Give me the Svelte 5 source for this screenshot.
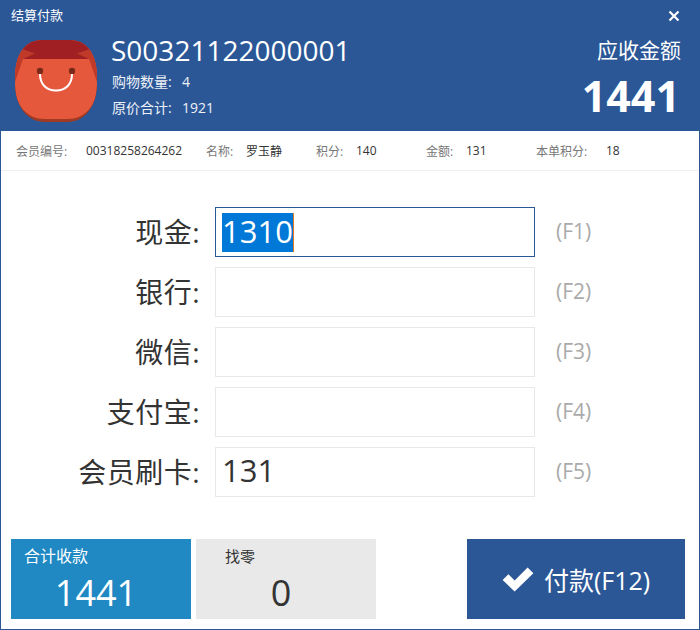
<script>
  const members = [
    { k: '会员编号:', v: '00318258264262', w: 190, kw: 70 },
    { k: '名称:', v: '罗玉静', w: 110, kw: 40 },
    { k: '积分:', v: '140', w: 110, kw: 40 },
    { k: '金额:', v: '131', w: 110, kw: 40 },
    { k: '本单积分:', v: '18', w: 100, kw: 70 }
  ];
  const rows = [
    { label: '现金:', value: '1310', key: '(F1)', active: true },
    { label: '银行:', value: '', key: '(F2)' },
    { label: '微信:', value: '', key: '(F3)' },
    { label: '支付宝:', value: '', key: '(F4)' },
    { label: '会员刷卡:', value: '131', key: '(F5)' }
  ];
</script>

<div class="win">
  <header class="head">
    <div class="title">结算付款</div>
    <svg class="close" viewBox="0 0 12 12" width="12" height="12"><path d="M1.5 1.5L10.5 10.5M10.5 1.5L1.5 10.5" stroke="#fff" stroke-width="2.2" fill="none"/></svg>
    <div class="summary">
      <svg class="bag" viewBox="0 0 82 82" width="82" height="82">
        <defs>
          <clipPath id="bagclip"><path d="M28 0H54C72 0 82 14 82 38V44C82 66 70 82 52 82H30C12 82 0 66 0 44V38C0 14 10 0 28 0Z"/></clipPath>
        </defs>
        <g clip-path="url(#bagclip)">
          <rect width="82" height="82" fill="#a03a22"/>
          <path d="M0 0H82V44C82 66 70 79 52 79H30C12 79 0 66 0 44Z" fill="#e6583b"/>
          <path d="M0 0H82V42L74 19H8L0 42Z" fill="#bf3a28"/>
          <path d="M8 19L20 13.500 4 8 4 0H78V8L62 13.500 74 19Z" fill="#a01f22"/>
        </g>
        <circle cx="25" cy="31" r="3.200" fill="#7a2a18"/>
        <circle cx="57" cy="31" r="3.200" fill="#7a2a18"/>
        <path d="M25 34C25 44 31 50.500 41 50.500C51 50.500 57 44 57 34" stroke="#fff" stroke-width="2" fill="none"/>
      </svg>
      <div class="order">
        <div class="no">S00321122000001</div>
        <div class="line"><span class="lk">购物数量:</span><span>4</span></div>
        <div class="line"><span class="lk">原价合计:</span><span>1921</span></div>
      </div>
      <div class="due">
        <div class="due-l">应收金额</div>
        <div class="due-v">1441</div>
      </div>
    </div>
  </header>

  <div class="members">
    {#each members as m}
      <div class="m" style="width:{m.w}px"><span class="mk" style="width:{m.kw}px">{m.k}</span><span class="mv">{m.v}</span></div>
    {/each}
  </div>

  <div class="form">
    {#each rows as r}
      <div class="row">
        <div class="label">{r.label}</div>
        <div class="input" class:active={r.active}>
          {#if r.active}<span class="sel">{r.value}</span>{:else}{r.value}{/if}
        </div>
        <div class="fkey">{r.key}</div>
      </div>
    {/each}
  </div>

  <div class="foot">
    <div class="card total">
      <div class="c-l">合计收款</div>
      <div class="c-v">1441</div>
    </div>
    <div class="card change">
      <div class="c-l">找零</div>
      <div class="c-v">0</div>
    </div>
    <div class="pay">
      <svg viewBox="0 0 32 26" width="32" height="25"><path d="M0 13.500L6 7.500 12.500 14 26 0.500 32 6.500 12.500 25.500Z" fill="#fff"/></svg>
      <span>付款(F12)</span>
    </div>
  </div>
</div>

<style>
  :global(body) { margin: 0; background: #fff; }
  .win {
    width: 700px; height: 630px; box-sizing: border-box;
    border: 1px solid #2b5797; border-top: 0;
    background: #fff; display: flex; flex-direction: column;
    font-family: "Open Sans", "Noto Sans CJK SC", sans-serif; color: #333;
    overflow: hidden;
  }
  .head { height: 131px; margin: 0 -1px; background: #2b5797; color: #fff; position: relative; flex: none; }
  .title { padding: 6px 0 0 11px; font-size: 13px; line-height: 18px; height: 33px; box-sizing: border-box; }
  .close { position: absolute; left: 668px; top: 10px; }
  .summary { display: flex; padding: 7px 19px 0 15px; }
  .bag { flex: none; }
  .order { margin-left: 14px; flex: 1; }
  .no { font-size: 28px; line-height: 37px; margin-top: -8px; height: 41px; }
  .line { font-size: 14px; line-height: 18px; height: 26px; display: flex; color: #eef2f8; padding-left: 1px; }
  .lk { width: 70px; }
  .due { text-align: right; }
  .due-l { font-size: 21px; line-height: 26px; margin-top: -3px; }
  .due-v { font-size: 43px; font-weight: 700; line-height: 56px; margin-top: 5px; padding-right: 1px; }
  .members { height: 40px; box-sizing: border-box; border-bottom: 1px solid #eee; display: flex; align-items: center; padding-left: 15px; font-size: 12px; flex: none; }
  .m { display: flex; flex: none; white-space: nowrap; }
  .mk { color: #777; flex: none; }
  .mv { color: #333; }
  .form { flex: 1; padding-top: 36px; display: flex; flex-direction: column; gap: 10px; }
  .row { display: flex; align-items: center; height: 50px; }
  .label { width: 199px; text-align: right; font-size: 28px; letter-spacing: .5px; line-height: 46px; height: 46px; color: #333; flex: none; white-space: nowrap; }
  .input {
    width: 320px; height: 50px; box-sizing: border-box; margin-left: 15px;
    border: 1px solid #e8e8e8; padding: 0 6px 4px; font-size: 31px; line-height: 44px; color: #333; flex: none; display: flex; align-items: center;
  }
  .input.active { border-color: #2b5797; padding-bottom: 0; }
  .sel { background: #0078d7; color: #fff; line-height: 37px; height: 39px; border-right: 1px solid #e77a1c; }
  .fkey { margin-left: 21px; font-size: 21px; line-height: 28px; margin-top: -3px; color: #aaa; }
  .foot { height: 90px; display: flex; padding-left: 10px; flex: none; }
  .card { width: 180px; height: 80px; margin-right: 5px; display: flex; flex-direction: column; }
  .total { background: #2089c4; color: #fff; }
  .change { background: #e9e9e9; color: #333; }
  .c-l { font-size: 16px; line-height: 20px; padding: 7px 0 0 13px; }
  .change .c-l { padding-left: 29px; font-size: 15px; }
  .c-v { font-size: 36px; line-height: 48px; text-align: center; margin-top: 3px; padding-right: 10px; }
  .pay {
    width: 218px; height: 80px; margin-left: 86px; background: #2b5797; color: #fff;
    display: flex; align-items: center; justify-content: center; gap: 10px; font-size: 25px;
  }
</style>
